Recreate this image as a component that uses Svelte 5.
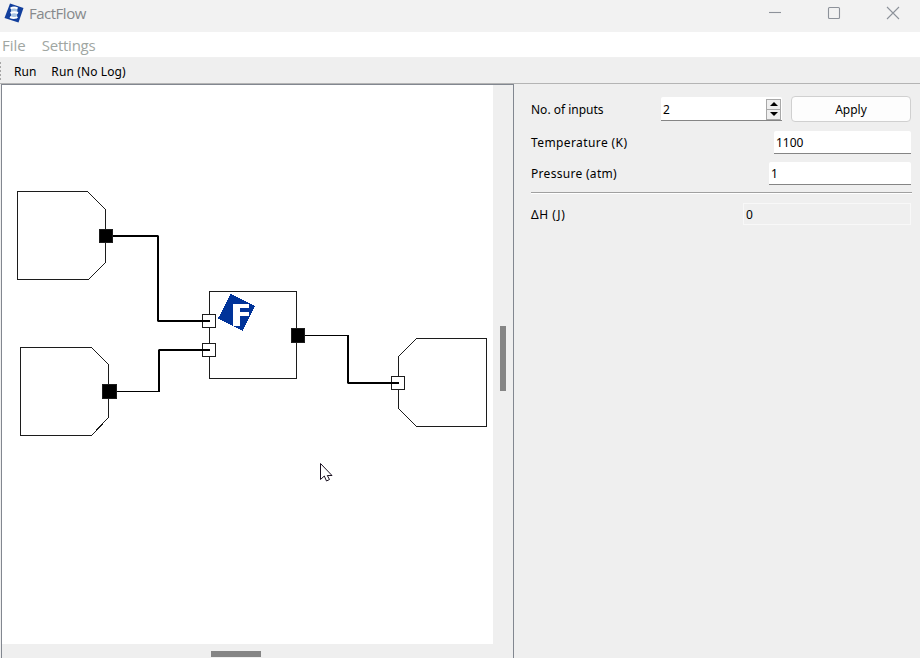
<script>
  const sockets = [
    { x: 99, y: 229, w: 14, h: 14, fill: '#000' },
    { x: 102, y: 384, w: 15, h: 15, fill: '#000' },
    { x: 202, y: 314, w: 14, h: 14, fill: '#fff' },
    { x: 202, y: 343, w: 14, h: 14, fill: '#fff' },
    { x: 291, y: 328, w: 14, h: 15, fill: '#000' },
    { x: 391, y: 376, w: 14, h: 14, fill: '#fff' }
  ];
  const outlines = [
    'M17.5 191.5H87.5L105.5 209.5V262.5L88.5 279.5H17.5Z',
    'M20.5 347.5H91.5L108.5 364.5V417.5L91.5 435.5H20.5Z',
    'M209.5 291.5H296.5V378.5H209.5Z',
    'M416.5 338.5H486.5V426.5H416.5L398.5 408.5V356.5Z'
  ];
  const wires = [
    'M113 236H158V321H210',
    'M159 391V350H210',
    'M348 335V383H399'
  ];
</script>

<div class="window">
  <header class="titlebar">
    <svg class="logo" width="20" height="20" viewBox="0 0 20 20">
      <path d="M6 .5L19.5 5 14.5 19.5 .5 15Z" fill="#123f9d" />
      <path d="M7 4.5L13.5 4 13 15.5 7 15Z" fill="#a9c4e2" />
      <path d="M6.5 5.5Q10 3.5 13.5 5.5M6.5 10Q10 8.5 14 10M6 14Q10 16 13.5 14" fill="none" stroke="#fff" stroke-width="2" />
    </svg>
    <span class="name">FactFlow</span>
    <div class="controls">
      <svg width="14" height="14" viewBox="0 0 14 14"><path d="M1 6.5H13" /></svg>
      <svg width="14" height="14" viewBox="0 0 14 14"><rect x="1.5" y="1.5" width="11" height="11" rx="1" /></svg>
      <svg width="14" height="14" viewBox="0 0 14 14"><path d="M1 1L13 13M13 1L1 13" /></svg>
    </div>
  </header>
  <nav class="menu"><span class="file">File</span><span class="settings">Settings</span></nav>
  <div class="toolbar"><i class="grip"></i><span class="run">Run</span><span class="nolog">Run (No Log)</span></div>

  <main>
    <section class="view">
      <svg class="scene" width="491" height="559" viewBox="2 85 491 559">
        {#each outlines as d}
          <path {d} fill="#fff" stroke="#1c1c1c" shape-rendering="crispEdges" />
        {/each}
        {#each sockets as s}
          <rect x={s.x + 0.5} y={s.y + 0.5} width={s.w - 1} height={s.h - 1} fill={s.fill} stroke="#1c1c1c" />
        {/each}
        {#each wires as d}
          <path {d} fill="none" stroke="#000" stroke-width="2" stroke-linejoin="bevel" />
        {/each}
        <path d="M117 391.5H160M305 335.5H349" stroke="#000" />
        <g shape-rendering="crispEdges">
          <path d="M230.500 294L255 306 242.500 331 218 318.500Z" fill="#003399" />
          <path d="M233 304H249V308H240V312H249V316H240V326H233Z" fill="#fff" />
        </g>
        <path d="M320.500 463.500V479.500L324.300 476 326.500 481 329.500 479.500 327.300 475.500H332Z" fill="#fff" stroke="#1a1020" />
      </svg>
      <div class="vscroll"><i></i></div>
      <div class="hscroll"><i></i></div>
    </section>

    <section class="panel">
      <div class="row first">
        <span class="l1">No. of inputs</span>
        <div class="field spin">
          <span>2</span>
          <div class="steps">
            <b><svg width="8" height="4"><path d="M0 4L4 0 8 4Z" /></svg></b>
            <b><svg width="8" height="4"><path d="M0 0L4 4 8 0Z" /></svg></b>
          </div>
        </div>
        <button><span>Apply</span></button>
      </div>
      <div class="row second"><span class="l2">Temperature (K)</span><div class="field temp"><span>1100</span></div></div>
      <div class="row third"><span class="l3">Pressure (atm)</span><div class="field pres"><span>1</span></div></div>
      <div class="rule"></div>
      <div class="row last"><span class="l4">ΔH (J)</span><div class="readonly">0</div></div>
    </section>
  </main>
</div>

<style>
  :global(body) { margin: 0; overflow: hidden; }
  .window { width: 920px; height: 658px; display: flex; flex-direction: column; background: #efefef; color: #000; font: 12px/16px "Noto Sans", sans-serif; white-space: nowrap; overflow: hidden; }
  .window *, .window { box-sizing: border-box; }
  svg { display: block; flex: none; }
  .titlebar { height: 32px; flex: none; display: flex; align-items: flex-start; background: #f2f2f2; padding: 3px 20px 0 4px; }
  .name { font: 15px/22px "Open Sans", sans-serif; color: #86898c; margin: -1px 0 0 5px; letter-spacing: -0.5px; }
  .controls { margin-left: auto; display: flex; gap: 45px; padding-top: 3px; }
  .controls svg { fill: none; stroke: #8d929a; stroke-width: 1.1; }
  .menu { height: 26px; flex: none; background: #fff; border-bottom: 1px solid #f0f0f0; padding: 2px 0 0 2px; display: flex; font: 15px/22px "Open Sans", sans-serif; color: #a0a6a2; }
  .settings { margin-left: 16px; letter-spacing: -0.25px; }
  .toolbar { height: 26px; flex: none; border-bottom: 1px solid #b4b4b4; display: flex; padding-top: 6px; }
  .grip { width: 1px; height: 18px; margin-top: -2px; background: repeating-linear-gradient(#a6a6a6 0 2px, #efefef 2px 4px); }
  .run { margin-left: 13px; }
  .nolog { margin-left: 15px; letter-spacing: 0.12px; }
  main { flex: 1; min-height: 0; display: flex; }
  .view { width: 513px; margin-left: 1px; height: 575px; flex: none; border: 1px solid #828790; border-bottom: 0; display: grid; grid-template-columns: 491px 20px; grid-template-rows: 559px 15px; }
  .scene { background: #fff; }
  .vscroll { padding: 241px 0 0 7px; }
  .vscroll i { display: block; width: 6px; height: 65px; background: #858585; }
  .hscroll { padding: 7px 0 0 209px; }
  .hscroll i { display: block; width: 50px; height: 6px; background: #858585; }
  .panel { flex: 1; padding: 12px 8px 0 17px; }
  .row { display: flex; justify-content: space-between; align-items: center; padding-right: 1px; }
  .first { height: 26px; }
  .second { height: 23px; margin-top: 9px; }
  .third { height: 23px; margin-top: 8px; }
  .last { height: 22px; margin-top: 9px; }
  .l1 { width: 130px; padding-top: 2px; }
  .l2 { letter-spacing: 0.4px; }
  .l3 { letter-spacing: 0.3px; }
  .l4 { letter-spacing: 0.5px; padding-top: 2px; }
  .field { height: 23px; background: #fff; border-bottom: 1px solid #858585; border-radius: 2px 2px 0 0; padding: 4px 2px 0; }
  .spin { width: 121px; height: 24px; padding: 1px 1px 0 2px; display: flex; justify-content: space-between; margin-right: 9px; align-items: center; }
  .spin > span { padding-top: 2px; }
  .steps { width: 15px; height: 21px; border: 1px solid #a8a8a8; display: flex; flex-direction: column; background: #efefef; }
  .steps b { flex: 1; display: grid; place-items: center; }
  .steps b + b { border-top: 1px solid #a8a8a8; }
  button { width: 120px; height: 26px; padding: 2px 0 0; border: 1px solid #d0d0d0; border-radius: 4px; background: #fdfdfd; font: inherit; color: #000; }
  .temp { width: 137px; }
  .pres { width: 142px; }
  .rule { height: 2px; margin-top: 7px; background: #a0a0a0; border-bottom: 1px solid #fff; }
  .readonly { width: 168px; height: 22px; border: 1px solid #f8f8f8; padding: 3px 2px 0; }
</style>
